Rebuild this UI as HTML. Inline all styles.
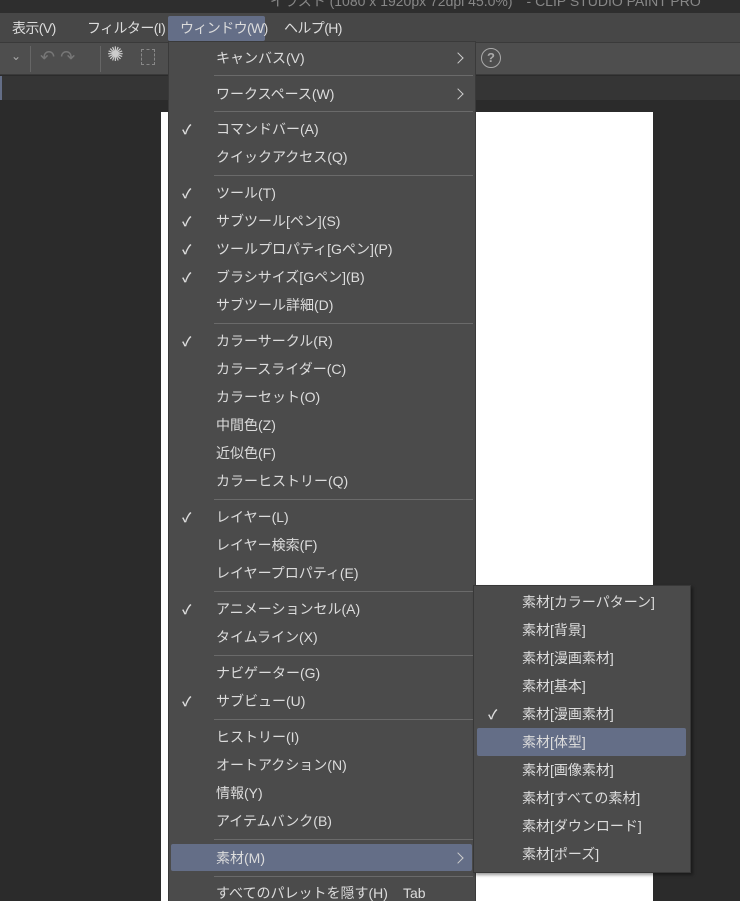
<!DOCTYPE html>
<html><head><meta charset="utf-8"><style>
*{margin:0;padding:0;box-sizing:border-box}
html,body{width:740px;height:901px;overflow:hidden}
body{background:#2b2b2b;font-family:"Liberation Sans","Noto Sans CJK JP",sans-serif;font-size:14px;color:#dcdcdc;position:relative}
.a{position:absolute}
.t{position:absolute;white-space:nowrap;line-height:20px}
.mb{letter-spacing:-0.6px}
.sep{position:absolute;height:1px;background:#6a6a6a}
.ck{position:absolute;font-size:13px;color:#ddd;font-weight:bold}
.ar{position:absolute;width:8px;height:8px;border-right:1.5px solid #ccc;border-top:1.5px solid #ccc;transform:rotate(45deg)}
</style></head><body>
<div class="a" style="left:0;top:0;width:740px;height:13px;background:#2e2e2e"></div>
<div class="t" style="left:270px;top:-9px;color:#888">イラスト (1080 x 1920px 72dpi 45.0%)　- CLIP STUDIO PAINT PRO</div>
<div class="a" style="left:0;top:13px;width:740px;height:29px;background:#474747"></div>
<div class="t mb" style="left:12px;top:18px">表示(V)</div>
<div class="t mb" style="left:87px;top:18px">フィルター(I)</div>
<div class="a" style="left:168px;top:16px;width:97px;height:25px;background:#646e87;border-radius:2px"></div>
<div class="t mb" style="left:180px;top:18px">ウィンドウ(W)</div>
<div class="t mb" style="left:284px;top:18px">ヘルプ(H)</div>
<div class="a" style="left:0;top:42px;width:740px;height:33px;background:#4e4e4e;border-top:1px solid #3a3a3a;border-bottom:1px solid #3a3a3a"></div>
<div class="a" style="left:30px;top:46px;width:1px;height:26px;background:#666"></div>
<div class="a" style="left:100px;top:46px;width:1px;height:26px;background:#666"></div>
<div class="t" style="left:11px;top:46px;color:#aaa;font-size:12px">⌄</div>
<div class="t" style="left:40px;top:47px;color:#777;font-size:18px">↶ ↷</div>
<div class="t" style="left:107px;top:45px;color:#ccc;font-size:20px">✺</div>
<div class="a" style="left:141px;top:49px;width:14px;height:16px;border:1px dashed #888"></div>
<div class="a" style="left:481px;top:48px;width:20px;height:20px;border:1.5px solid #aaa;border-radius:50%;color:#aaa;font-size:13px;text-align:center;line-height:17px;font-weight:bold">?</div>
<div class="a" style="left:0;top:76px;width:740px;height:24px;background:#353535"></div>
<div class="a" style="left:0;top:76px;width:2px;height:24px;background:#646e87"></div>
<div class="a" style="left:161px;top:112px;width:492px;height:789px;background:#fff"></div>

<div class="a" style="left:168px;top:41px;width:308px;height:860px;background:#4b4b4b;border:1px solid #3a3a3a;border-bottom:none"></div>
<div class="a" style="left:171px;top:844px;width:301px;height:27px;background:#646e87;border-radius:2px"></div>
<div id="m"></div>

<div class="a" style="left:473px;top:585px;width:218px;height:288px;background:#4b4b4b;border:1px solid #383838;box-shadow:2px 2px 3px rgba(0,0,0,.4)"></div>
<div class="a" style="left:477px;top:728px;width:209px;height:28px;background:#646e87;border-radius:2px"></div>
<div id="s"></div>
<script>
var items=[[58,"キャンバス(V)",0,1],[94,"ワークスペース(W)",0,1],[129,"コマンドバー(A)",1],[157,"クイックアクセス(Q)"],[193,"ツール(T)",1],[221,"サブツール[ペン](S)",1],[249,"ツールプロパティ[Gペン](P)",1],[277,"ブラシサイズ[Gペン](B)",1],[305,"サブツール詳細(D)"],[341,"カラーサークル(R)",1],[369,"カラースライダー(C)"],[397,"カラーセット(O)"],[425,"中間色(Z)"],[453,"近似色(F)"],[481,"カラーヒストリー(Q)"],[517,"レイヤー(L)",1],[545,"レイヤー検索(F)"],[573,"レイヤープロパティ(E)"],[609,"アニメーションセル(A)",1],[637,"タイムライン(X)"],[673,"ナビゲーター(G)"],[701,"サブビュー(U)",1],[737,"ヒストリー(I)"],[765,"オートアクション(N)"],[793,"情報(Y)"],[821,"アイテムバンク(B)"],[858,"素材(M)",0,1],[893,"すべてのパレットを隠す(H)"]];
var h="";
items.forEach(function(i){h+='<div class="t" style="left:216px;top:'+(i[0]-10)+'px">'+i[1]+'</div>';
if(i[2])h+='<div class="ck" style="left:182px;top:'+(i[0]-10)+'px">✓</div>';
if(i[3])h+='<div class="ar" style="left:454px;top:'+(i[0]-4)+'px"></div>';});
[75,111,175,323,499,591,655,719,839,876].forEach(function(y){h+='<div class="sep" style="left:214px;top:'+y+'px;width:259px"></div>'});
h+='<div class="t" style="left:403px;top:883px">Tab</div>';
document.getElementById("m").innerHTML=h;
var s=["素材[カラーパターン]","素材[背景]","素材[漫画素材]","素材[基本]","素材[漫画素材]","素材[体型]","素材[画像素材]","素材[すべての素材]","素材[ダウンロード]","素材[ポーズ]"];
h="";s.forEach(function(t,k){var y=602+28*k;h+='<div class="t" style="left:522px;top:'+(y-10)+'px">'+t+'</div>';if(k==4)h+='<div class="ck" style="left:488px;top:'+(y-10)+'px">✓</div>';});
document.getElementById("s").innerHTML=h;
</script>
</body></html>
